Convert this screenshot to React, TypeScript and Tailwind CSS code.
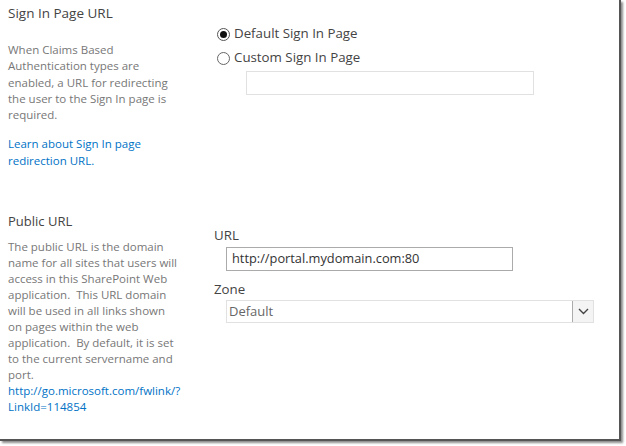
import React from 'react'

const font = { fontFamily: '"Open Sans", "Noto Sans", sans-serif' }

const Lines: React.FC<{ lines: string[]; className?: string }> = ({ lines, className }) => (
  <div className={className}>
    {lines.map((l, i) => (
      <div key={i} className="whitespace-pre">{l}</div>
    ))}
  </div>
)

const App: React.FC = () => {
  return (
    <div className="w-[626px] h-[446px] bg-white" style={font}>
      <div className="w-[621px] h-[441px] bg-white border-r-2 border-b-2 border-[#555] shadow-[2px_2px_2px_rgba(0,0,0,0.45)] overflow-hidden">
        {/* Sign In Page URL */}
        <div className="flex h-[211px]">
          <div className="w-[206px] pl-[8px] pt-[3px]">
            <h2 className="text-[13.5px] leading-[20px] text-[#444]">Sign In Page URL</h2>
            <Lines
              className="mt-[19px] text-[11.5px] leading-[16.3px] text-[#777]"
              lines={[
                'When Claims Based',
                'Authentication types are',
                'enabled, a URL for redirecting',
                'the user to the Sign In page is',
                'required.',
              ]}
            />
            <Lines
              className="mt-[13px] text-[11.5px] leading-[16.3px] text-[#0072c6]"
              lines={['Learn about Sign In page', 'redirection URL.']}
            />
          </div>
          <div className="pl-[11px] pt-[23px]">
            <label className="flex items-center gap-[4px] h-[22px] text-[13.3px] text-[#444]">
              <span className="w-[13px] h-[13px] rounded-full border border-[#555] flex items-center justify-center">
                <span className="w-[7px] h-[7px] rounded-full bg-[#111]" />
              </span>
              Default Sign In Page
            </label>
            <label className="flex items-center gap-[4px] h-[22px] mt-[2px] text-[13.3px] text-[#444]">
              <span className="w-[13px] h-[13px] rounded-full border border-[#666]" />
              Custom Sign In Page
            </label>
            <div className="ml-[29px] mt-[2px] w-[288px] h-[24px] border border-[#e1e1e1] bg-white" />
          </div>
        </div>

        {/* Public URL */}
        <div className="flex">
          <div className="w-[206px] pl-[8px]">
            <h2 className="text-[13px] leading-[20px] text-[#444]">Public URL</h2>
            <Lines
              className="mt-[8px] text-[11.5px] leading-[16px] text-[#777]"
              lines={[
                'The public URL is the domain',
                'name for all sites that users will',
                'access in this SharePoint Web',
                'application.  This URL domain',
                'will be used in all links shown',
                'on pages within the web',
                'application.  By default, it is set',
                'to the current servername and',
                'port.',
              ]}
            />
            <Lines
              className="text-[11.5px] leading-[16px] text-[#0072c6]"
              lines={['http://go.microsoft.com/fwlink/?', 'LinkId=114854']}
            />
          </div>
          <div className="pl-[8px] pt-[14px]">
            <div className="text-[13.3px] leading-[20px] text-[#444]">URL</div>
            <div className="ml-[12px] mt-[2px] w-[287px] h-[24px] border border-[#ababab] flex items-center px-[5px] text-[12.8px] text-[#333]">
              http://portal.mydomain.com:80
            </div>
            <div className="mt-[8px] text-[13.3px] leading-[20px] text-[#444]">Zone</div>
            <div className="ml-[12px] mt-[1px] w-[368px] h-[23px] border border-[#e1e1e1] flex items-center">
              <span className="flex-1 px-[2px] text-[13px] text-[#666]">Default</span>
              <span className="w-[21px] h-[21px] border-l border-[#ababab] bg-[#f4f4f4] flex items-center justify-center">
                <svg width="11" height="7" viewBox="0 0 11 7">
                  <path d="M1 1 L5.5 5.5 L10 1" fill="none" stroke="#444" strokeWidth="1.4" />
                </svg>
              </span>
            </div>
          </div>
        </div>
      </div>
    </div>
  )
}

export default App
